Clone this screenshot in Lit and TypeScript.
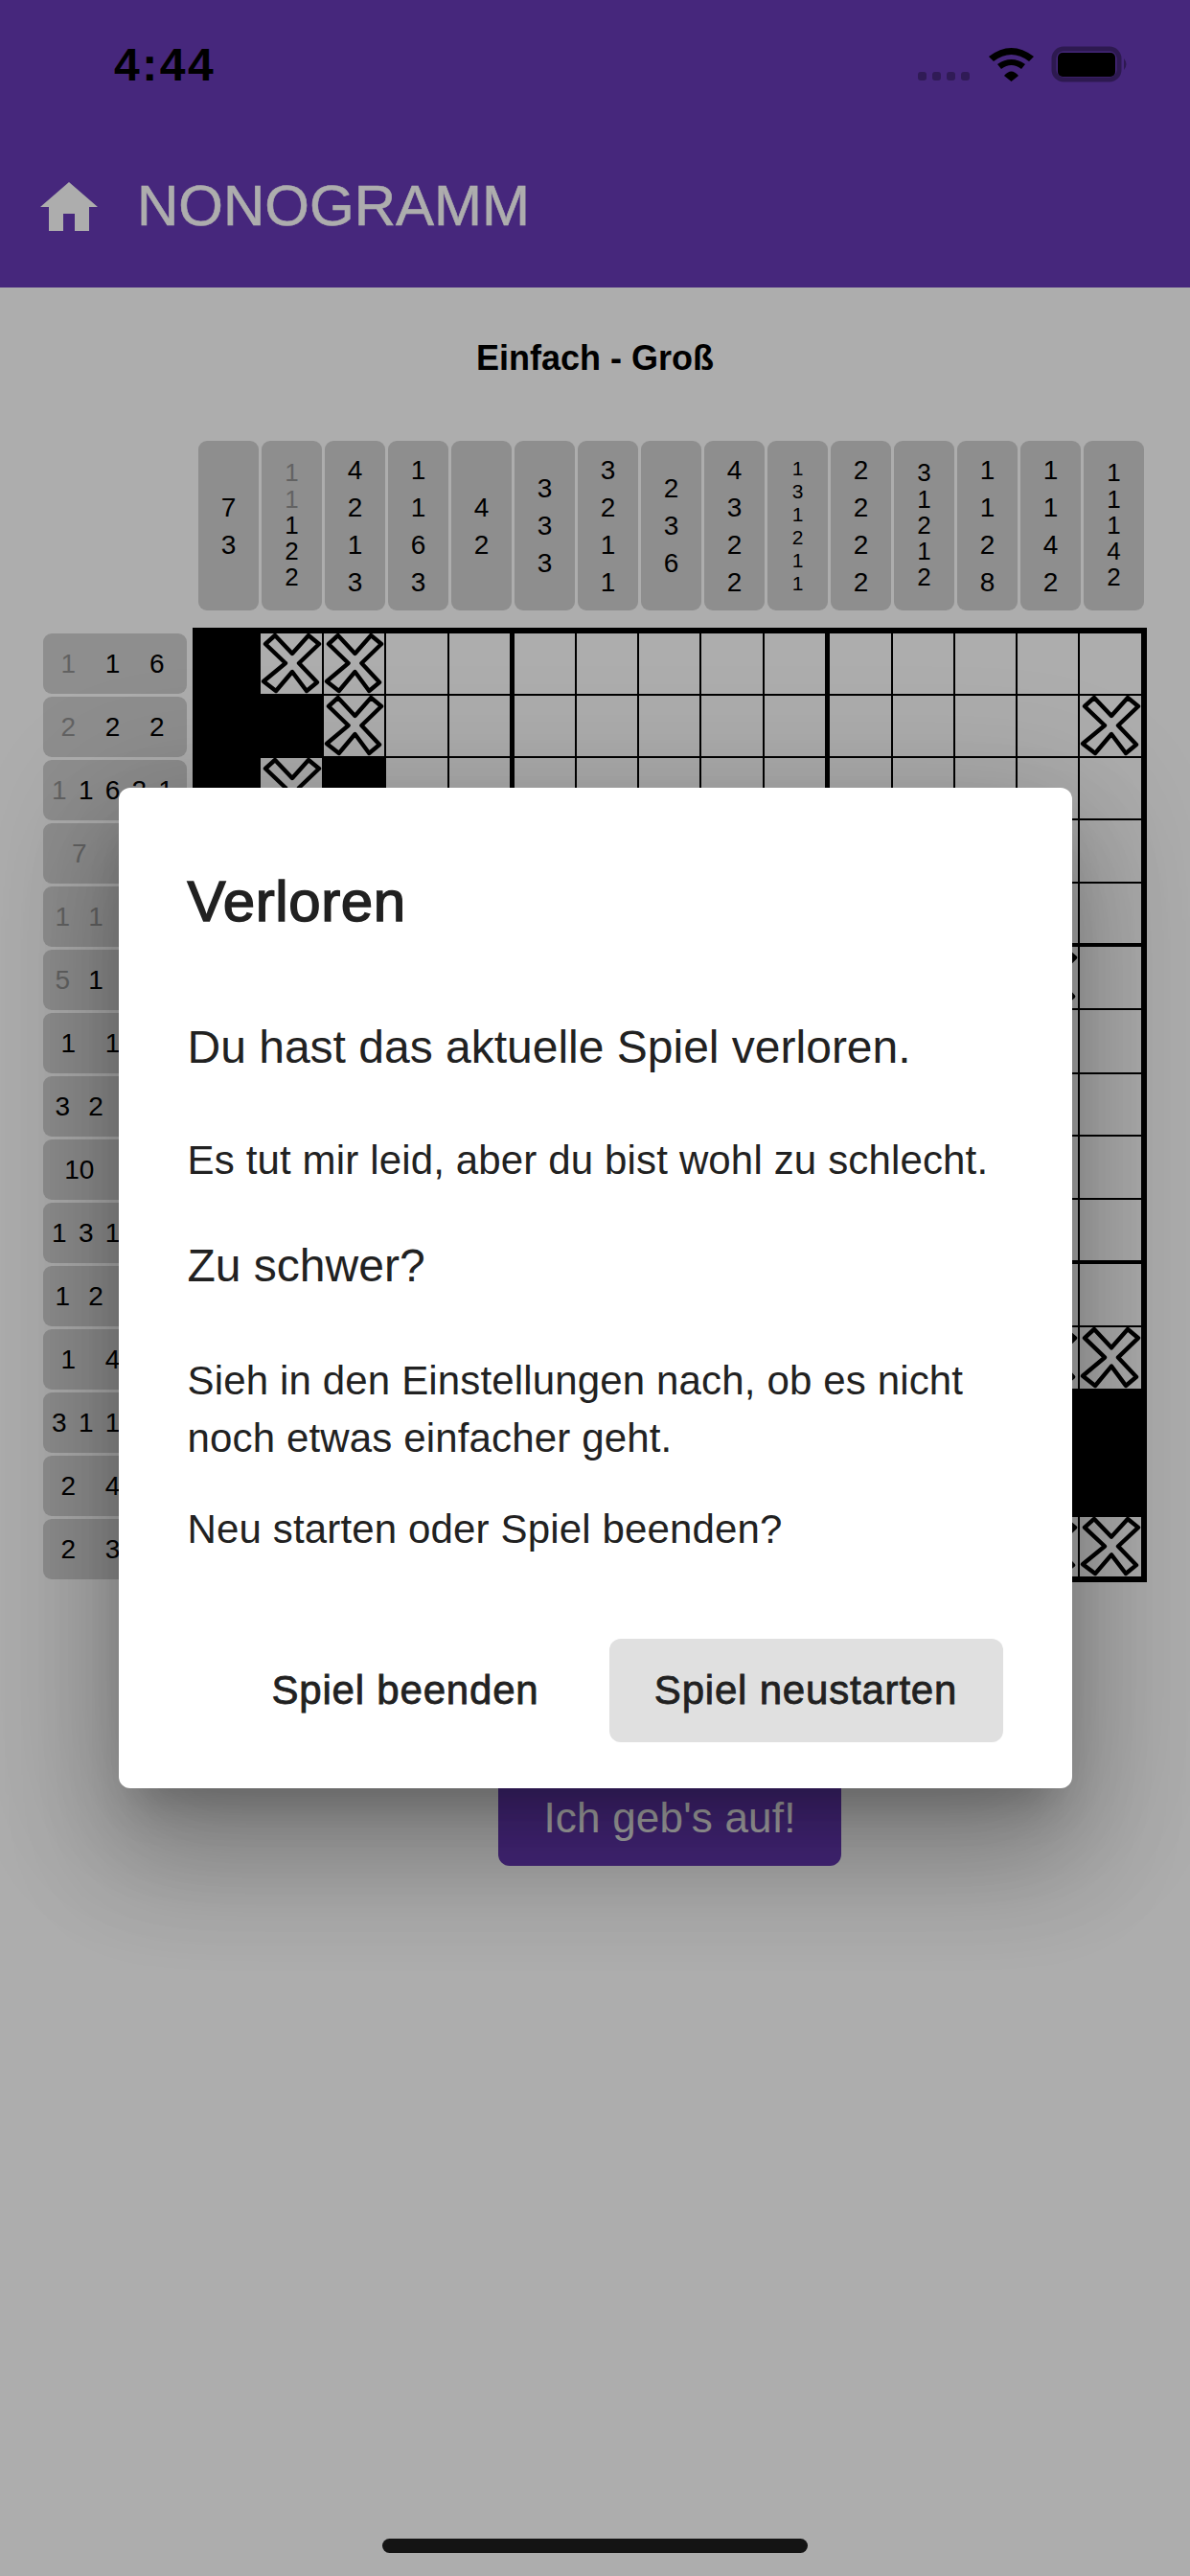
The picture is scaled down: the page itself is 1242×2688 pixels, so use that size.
import { LitElement, html, css, svg } from "lit";
import { customElement } from "lit/decorators.js";

// value: number, dim flag via "~" prefix
const COLS: string[][] = [
  ["7", "3"],
  ["~1", "~1", "1", "2", "2"],
  ["4", "2", "1", "3"],
  ["1", "1", "6", "3"],
  ["4", "2"],
  ["3", "3", "3"],
  ["3", "2", "1", "1"],
  ["2", "3", "6"],
  ["4", "3", "2", "2"],
  ["1", "3", "1", "2", "1", "1"],
  ["2", "2", "2", "2"],
  ["3", "1", "2", "1", "2"],
  ["1", "1", "2", "8"],
  ["1", "1", "4", "2"],
  ["1", "1", "1", "4", "2"],
];
const ROWS: string[][] = [
  ["~1", "1", "6"],
  ["~2", "2", "2"],
  ["~1", "1", "6", "2", "1"],
  ["~7", "2"],
  ["~1", "~1", "1", "2"],
  ["~5", "1", "1", "2"],
  ["1", "1", "3"],
  ["3", "2", "1", "2"],
  ["10", "2"],
  ["1", "3", "1", "1", "1"],
  ["1", "2", "3", "1"],
  ["1", "4", "2"],
  ["3", "1", "1", "1", "2"],
  ["2", "4", "2"],
  ["2", "3", "1"],
];
// . empty, # filled, x crossed
const BOARD = [
  "#xx............",
  "##x...........x",
  "#x#............",
  "...............",
  "...............",
  ".............x.",
  "...............",
  "...............",
  "...............",
  "...............",
  "...............",
  ".............xx",
  ".............##",
  ".............##",
  ".............xx",
];

const crossMark = svg`<svg class="x" viewBox="0 0 64 63" preserveAspectRatio="none" aria-hidden="true"><path d="M15 2 L33 21 L50 2 L61 11 L40 31 L59 51 L48 60 L33 40 L16 60 L3 50 L26 31 L5 11 Z" fill="none" stroke="#000" stroke-width="4.4" stroke-linejoin="round"/></svg>`;

@customElement("app-root")
export class AppRoot extends LitElement {
  static styles = css`
    :host {
      display: block;
      position: relative;
      width: 1242px;
      height: 2688px;
      overflow: hidden;
      background: #fff;
      font-family: "Liberation Sans", Arial, sans-serif;
      color: #000;
    }
    .page {
      display: flex;
      flex-direction: column;
      align-items: stretch;
    }
    .header {
      height: 300px;
      background: #673ab7;
      color: #fff;
      display: flex;
      flex-direction: column;
    }
    .toolbar {
      flex: 1;
      display: flex;
      align-items: center;
      padding: 28px 0 0 42px;
      gap: 41px;
    }
    .home {
      width: 60px;
      height: 51px;
      flex: none;
    }
    .app-title {
      font-size: 60px;
      line-height: 72px;
      -webkit-text-stroke: 0.6px #fff;
    }
    .level {
      margin-top: 53px;
      text-align: center;
      font-size: 36px;
      font-weight: 700;
      line-height: 42px;
    }
    .puzzle {
      margin: 65px 0 0 45px;
      display: grid;
      grid-template-columns: 150px 1fr;
      grid-template-rows: 177px auto;
      column-gap: 6px;
      row-gap: 18px;
    }
    .col-clues {
      grid-column: 2;
      display: flex;
      gap: 3px;
      padding-left: 6px;
    }
    .cc {
      width: 63px;
      height: 177px;
      box-sizing: border-box;
      background: #d1d1d1;
      border-radius: 9px;
      display: flex;
      flex-direction: column;
      align-items: center;
      justify-content: center;
      font-size: 28px;
      line-height: 39px;
    }
    .cc.n5 {
      font-size: 26px;
      line-height: 27.3px;
    }
    .cc.n6 {
      font-size: 21px;
      line-height: 24px;
    }
    .dim {
      opacity: 0.3;
    }
    .row-clues {
      grid-column: 1;
      display: flex;
      flex-direction: column;
      gap: 3px;
      padding-top: 6px;
    }
    .rc {
      height: 63px;
      box-sizing: border-box;
      padding: 0 8px 0 3px;
      background: #d1d1d1;
      border-radius: 9px;
      display: flex;
      align-items: center;
      font-size: 28px;
    }
    .rc span {
      flex: 1;
      text-align: center;
    }
    .board {
      width: 996px;
      height: 996px;
      box-sizing: border-box;
      border: 6px solid #000;
      background: #000;
      display: grid;
      grid-template-columns: 63px 64px 63px 64px 66px 63px 63px 63px 64px 66px 64px 63px 63px 63px 64px;
      grid-template-rows: 63px 63px 63px 64px 64px 64px 65px 63px 64px 65px 64px 64px 64px 64px 62px;
      gap: 2px;
    }
    .cell {
      background: #fff;
      min-width: 0;
      min-height: 0;
    }
    .cell.filled {
      background: #000;
    }
    /* thick separators after every fifth column and row */
    .cell.end-col {
      margin-right: 3px;
    }
    .cell.end-row {
      margin-bottom: 2px;
    }
    .x {
      display: block;
      width: 100%;
      height: 100%;
    }
    .actions {
      display: flex;
      justify-content: center;
      margin-top: 196px;
      padding-left: 156px;
    }
    .giveup {
      width: 358px;
      height: 100px;
      background: #673ab7;
      color: #fff;
      border-radius: 12px;
      font-size: 44px;
      letter-spacing: 0.2px;
      display: flex;
      align-items: center;
      justify-content: center;
    }
    .status {
      display: flex;
      align-items: center;
      justify-content: space-between;
      height: 68px;
      padding: 34px 60px 0 119px;
    }
    .time {
      font-size: 48px;
      font-weight: 700;
      line-height: 50px;
      color: #000;
      letter-spacing: 2.5px;
    }
    .sys {
      display: block;
      width: 232px;
      height: 40px;
    }
    .overlay {
      position: absolute;
      inset: 0;
      background: rgba(0, 0, 0, 0.32);
      display: flex;
      align-items: center;
      justify-content: center;
    }
    .dialog {
      width: 995px;
      height: 1044px;
      box-sizing: border-box;
      background: #fff;
      border-radius: 12px;
      padding: 87px 72px 48px;
      color: #212121;
      box-shadow: 0 33px 45px -21px rgba(0, 0, 0, 0.22), 0 72px 114px 9px rgba(0, 0, 0, 0.18),
        0 27px 138px 24px rgba(0, 0, 0, 0.16);
      display: flex;
      flex-direction: column;
    }
    h2 {
      margin: 0 0 90px;
      font-size: 60px;
      line-height: 64px;
      font-weight: 400;
      -webkit-text-stroke: 1.5px #212121;
      letter-spacing: 0.6px;
    }
    h3 {
      margin: 0;
      font-size: 48px;
      line-height: 60px;
      font-weight: 400;
    }
    p {
      margin: 0;
      font-size: 42px;
      line-height: 60px;
      letter-spacing: 0.15px;
    }
    .m1 {
      margin-top: 58px;
    }
    .m2 {
      margin-top: 60px;
    }
    .m3 {
      margin-top: 50px;
    }
    .m4 {
      margin-top: 35px;
    }
    .buttons {
      margin-top: auto;
      display: flex;
      justify-content: flex-end;
      gap: 27px;
    }
    .btn {
      height: 108px;
      width: 411px;
      border-radius: 12px;
      display: flex;
      align-items: center;
      justify-content: center;
      font-size: 42px;
      -webkit-text-stroke: 0.8px #212121;
      letter-spacing: 0.8px;
    }
    .btn.alt {
      width: 371px;
    }
    .btn.primary {
      background: #e0e0e0;
    }
    .indicator {
      position: absolute;
      left: 399px;
      top: 2649px;
      width: 444px;
      height: 15px;
      border-radius: 8px;
      background: #141414;
    }
  `;

  private num(v: string) {
    const dim = v.startsWith("~");
    return html`<span class=${dim ? "dim" : ""}>${dim ? v.slice(1) : v}</span>`;
  }

  private cellClass(c: string, row: number, col: number) {
    const parts = ["cell"];
    if (c === "#") parts.push("filled");
    if (col === 4 || col === 9) parts.push("end-col");
    if (row === 4 || row === 9) parts.push("end-row");
    return parts.join(" ");
  }

  render() {
    return html`
      <div class="page">
        <header class="header">
          <div class="status">
            <span class="time">4:44</span>
            <svg class="sys" viewBox="950 48 232 40" aria-hidden="true">
              <g fill="#000" opacity="0.3">
                <rect x="958" y="75" width="9" height="9" rx="3" />
                <rect x="973" y="75" width="9" height="9" rx="3" />
                <rect x="988" y="75" width="9" height="9" rx="3" />
                <rect x="1003" y="75" width="9" height="9" rx="3" />
              </g>
              <path
                d="M1032 59 Q1055.5 41 1079 59 L1074 64 Q1055.5 50 1037 64 Z M1041 67 Q1055.5 57 1070 67 L1066 72 Q1055.5 64 1045 72 Z M1048 79 Q1055.5 70 1063 79 L1055.5 85 Z"
                fill="#000"
              />
              <rect x="1100" y="51" width="68" height="32" rx="10" fill="none" stroke="#000" stroke-opacity="0.35" stroke-width="5" />
              <rect x="1104" y="55" width="60" height="25" rx="5" fill="#000" />
              <path d="M1173 61 Q1178 67 1173 73 Z" fill="#000" opacity="0.35" />
            </svg>
          </div>
          <div class="toolbar">
            <svg class="home" viewBox="0 0 60 51" aria-hidden="true">
              <path d="M30 0 L60 26 H51 V51 H36 V33 H24 V51 H9 V26 H0 Z" fill="#fff" />
            </svg>
            <span class="app-title">NONOGRAMM</span>
          </div>
        </header>
        <div class="level">Einfach - Groß</div>
        <div class="puzzle">
          <div class="col-clues">
            ${COLS.map(
              (c) =>
                html`<div class="cc ${c.length >= 6 ? "n6" : c.length === 5 ? "n5" : ""}">${c.map((v) => this.num(v))}</div>`
            )}
          </div>
          <div class="row-clues">
            ${ROWS.map((r) => html`<div class="rc">${r.map((v) => this.num(v))}</div>`)}
          </div>
          <div class="board">
            ${BOARD.flatMap((row, ri) =>
              row
                .split("")
                .map((c, ci) => html`<div class=${this.cellClass(c, ri, ci)}>${c === "x" ? crossMark : ""}</div>`)
            )}
          </div>
        </div>
        <div class="actions"><div class="giveup">Ich geb's auf!</div></div>
      </div>
      <div class="overlay">
        <div class="dialog" role="dialog">
          <h2>Verloren</h2>
          <h3>Du hast das aktuelle Spiel verloren.</h3>
          <p class="m1">Es tut mir leid, aber du bist wohl zu schlecht.</p>
          <h3 class="m3">Zu schwer?</h3>
          <p class="m2">Sieh in den Einstellungen nach, ob es nicht noch etwas einfacher geht.</p>
          <p class="m4">Neu starten oder Spiel beenden?</p>
          <div class="buttons">
            <div class="btn alt">Spiel beenden</div>
            <div class="btn primary">Spiel neustarten</div>
          </div>
        </div>
      </div>
      <div class="indicator"></div>
    `;
  }
}
